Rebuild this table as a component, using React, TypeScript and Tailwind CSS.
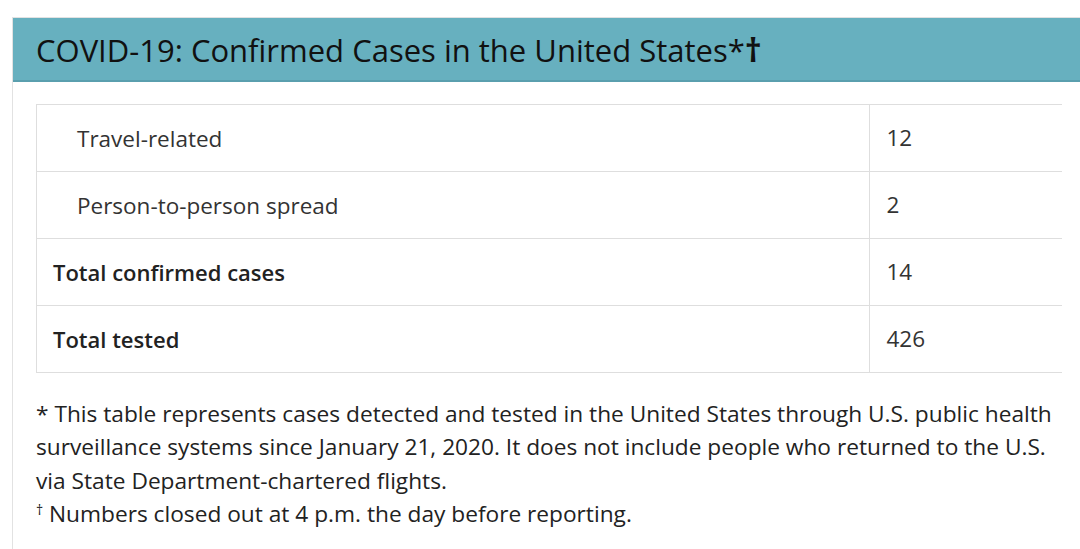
export default function App() {
  const rows = [
    { label: "Travel-related", value: "12", indent: true },
    { label: "Person-to-person spread", value: "2", indent: true },
    { label: "Total confirmed cases", value: "14", indent: false },
    { label: "Total tested", value: "426", indent: false },
  ];
  return (
    <div
      className="w-[1080px] h-[549px] overflow-hidden bg-white pt-[17px] pl-[12px]"
      style={{ fontFamily: '"Open Sans", sans-serif' }}
    >
      <div className="border-l border-t border-[#e2e2e2] h-full">
        {/* En-tête */}
        <div className="h-[64px] bg-[#67b0bf] border-b-2 border-[#5a9fae] flex items-center pl-[23px]">
          <h2 className="text-[31px] text-[#111] leading-none">
            COVID-19: Confirmed Cases in the United States*
            <span className="font-bold text-[33px]">†</span>
          </h2>
        </div>

        {/* Tableau */}
        <div className="pl-[23px] pr-[18px] pt-[22px]">
          <table className="w-full border-collapse text-[22.5px] text-[#333]">
            <tbody>
              {rows.map((r) => (
                <tr key={r.label} className="h-[67px]">
                  <td
                    className={
                      "border-l border-t border-b border-[#dedede] " +
                      (r.indent ? "pl-[40px] pt-[2px]" : "pl-[16px] font-semibold text-[22px] text-[#222]")
                    }
                  >
                    {r.label}
                  </td>
                  <td className="border-l border-t border-b border-[#dedede] w-[193px] pl-[17px]">{r.value}</td>
                </tr>
              ))}
            </tbody>
          </table>

          {/* Notes */}
          <div className="pt-[24px] text-[22.7px] leading-[33.3px] text-[#222] pr-[6px]">
            <p>
              * This table represents cases detected and tested in the United States through U.S. public health
              surveillance systems since January 21, 2020. It does not include people who returned to the U.S.
              via State Department-chartered flights.
            </p>
            <p>
              <sup className="text-[14px] leading-none">†</sup> Numbers closed out at 4 p.m. the day before reporting.
            </p>
          </div>
        </div>
      </div>
    </div>
  );
}
